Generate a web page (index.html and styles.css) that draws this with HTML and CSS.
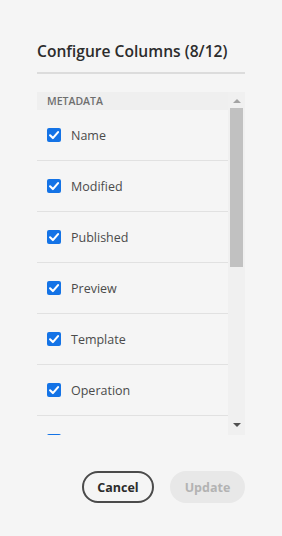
FILE: index.html
```html
<!DOCTYPE html>
<html>
<head>
<meta charset="utf-8">
<title>Configure Columns</title>
<link rel="stylesheet" href="styles.css">
</head>
<body>
  <div class="dialog">
    <h2 class="title">Configure Columns (8/12)</h2>
    <div class="divider"></div>

    <div class="picker">
      <div class="list">
        <div class="group">METADATA</div>
        <label class="row"><span class="check"><svg viewBox="0 0 10 10"><path d="M2.2 5.2 L4.2 7.2 L7.9 2.9"/></svg></span>Name</label>
        <label class="row"><span class="check"><svg viewBox="0 0 10 10"><path d="M2.2 5.2 L4.2 7.2 L7.9 2.9"/></svg></span>Modified</label>
        <label class="row"><span class="check"><svg viewBox="0 0 10 10"><path d="M2.2 5.2 L4.2 7.2 L7.9 2.9"/></svg></span>Published</label>
        <label class="row"><span class="check"><svg viewBox="0 0 10 10"><path d="M2.2 5.2 L4.2 7.2 L7.9 2.9"/></svg></span>Preview</label>
        <label class="row"><span class="check"><svg viewBox="0 0 10 10"><path d="M2.2 5.2 L4.2 7.2 L7.9 2.9"/></svg></span>Template</label>
        <label class="row"><span class="check"><svg viewBox="0 0 10 10"><path d="M2.2 5.2 L4.2 7.2 L7.9 2.9"/></svg></span>Operation</label>
        <label class="row"><span class="check"><svg viewBox="0 0 10 10"><path d="M2.2 5.2 L4.2 7.2 L7.9 2.9"/></svg></span>Workflow</label>
      </div>
      <div class="scrollbar">
        <div class="arrow up"></div>
        <div class="track"><div class="thumb"></div></div>
        <div class="arrow down"></div>
      </div>
    </div>

    <div class="actions">
      <button class="btn cancel">Cancel</button>
      <button class="btn update" disabled>Update</button>
    </div>
  </div>
</body>
</html>
```

FILE: styles.css
```css
html, body {
  margin: 0;
  height: 100%;
  background: #f5f5f5;
  font-family: "Open Sans", "Noto Sans", sans-serif;
  color: #2c2c2c;
}

.dialog {
  padding: 38px 37px 0 37px;
}

.title {
  margin: 0;
  font-size: 15.6px;
  font-weight: 600;
  line-height: 26px;
  color: #2c2c2c;
}

.divider {
  height: 2px;
  background: #dcdcdc;
  margin-top: 8px;
}

.picker {
  display: flex;
  margin-top: 18px;
  height: 343px;
}

.list {
  flex: 1;
  overflow: hidden;
}

.group {
  height: 18px;
  line-height: 18px;
  padding-left: 10px;
  font-size: 10.5px;
  font-weight: 600;
  color: #6e6e6e;
  background: #efefef;
}

.row {
  display: flex;
  align-items: center;
  height: 50px;
  border-bottom: 1px solid #e1e1e1;
  padding-left: 10px;
  font-size: 12.5px;
  color: #4b4b4b;
}

.check {
  width: 14px;
  height: 14px;
  border-radius: 2px;
  background: #1473e6;
  margin-right: 10px;
  display: flex;
}

.check svg {
  width: 14px;
  height: 14px;
  fill: none;
  stroke: #fff;
  stroke-width: 1.5;
  stroke-linecap: round;
  stroke-linejoin: round;
}

.scrollbar {
  width: 17px;
  background: #f0f0f0;
  display: flex;
  flex-direction: column;
  align-items: center;
}

.arrow {
  width: 0;
  height: 0;
  border-left: 4px solid transparent;
  border-right: 4px solid transparent;
}

.arrow.up {
  margin: 7px 0 5px;
  border-bottom: 4px solid #a3a3a3;
}

.arrow.down {
  margin: 5px 0 8px;
  border-top: 4px solid #505050;
}

.track {
  flex: 1;
  align-self: stretch;
  padding: 0 2px;
}

.thumb {
  height: 159px;
  background: #c1c1c1;
}

.actions {
  display: flex;
  justify-content: flex-end;
  gap: 16px;
  margin-top: 36px;
}

.btn {
  height: 32px;
  border-radius: 16px;
  font-family: "Open Sans", "Noto Sans", sans-serif;
  font-size: 12.5px;
  font-weight: 700;
  padding: 0;
}

.cancel {
  width: 72px;
  border: 2px solid #4b4b4b;
  background: transparent;
  color: #2c2c2c;
}

.update {
  width: 75px;
  border: 2px solid #e8e8e8;
  background: #e8e8e8;
  color: #b3b3b3;
}
```
